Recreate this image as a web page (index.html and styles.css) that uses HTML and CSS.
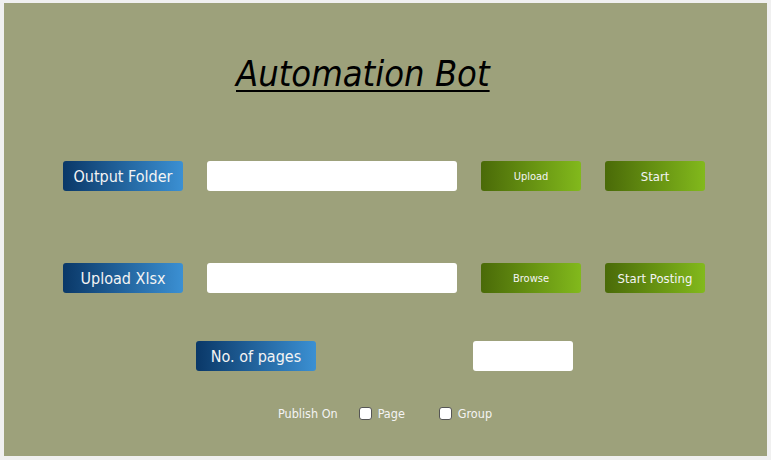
FILE: index.html
```html
<!DOCTYPE html>
<html>
<head>
<meta charset="utf-8">
<link rel="stylesheet" href="styles.css">
</head>
<body>
<div class="panel">
  <h1 class="title">Automation Bot</h1>
  <div class="row row1">
    <div class="label">Output Folder</div>
    <input class="field" type="text">
    <button class="btn btn-small">Upload</button>
    <button class="btn">Start</button>
  </div>
  <div class="row row2">
    <div class="label">Upload Xlsx</div>
    <input class="field" type="text">
    <button class="btn btn-small">Browse</button>
    <button class="btn">Start Posting</button>
  </div>
  <div class="row row3">
    <div class="label">No. of pages</div>
    <input class="field field-short" type="text">
  </div>
  <div class="publish">
    <span class="pub-label">Publish On</span>
    <label class="check"><span class="box"></span>Page</label>
    <label class="check check-group"><span class="box"></span>Group</label>
  </div>
</div>
</body>
</html>
```
FILE: styles.css
```css
html, body {
  margin: 0;
  padding: 0;
  background: #f0f0f0;
}
body {
  padding: 3px 4px 4px 4px;
  font-family: "DejaVu Sans Condensed", "DejaVu Sans", sans-serif;
}
.panel {
  width: 763px;
  height: 453px;
  background: #9da17b;
  box-sizing: border-box;
  padding-top: 50px;
}
.title {
  margin: 0 0 0 232px;
  font-family: "DejaVu Sans Condensed", "DejaVu Sans", sans-serif;
  font-style: italic;
  font-weight: normal;
  font-size: 36px;
  line-height: 42px;
  color: #000;
  text-decoration: underline;
  text-decoration-thickness: 2px;
  text-underline-offset: 4px;
}
.row {
  display: flex;
  align-items: center;
  height: 30px;
}
.row1 { margin-top: 66px; padding-left: 59px; }
.row2 { margin-top: 72px; padding-left: 59px; }
.row3 { margin-top: 48px; padding-left: 192px; }
.label {
  width: 120px;
  height: 30px;
  border-radius: 3px;
  background: linear-gradient(to right, #0a3868, #3b90d3);
  color: #f4f4f4;
  font-size: 16px;
  display: flex;
  align-items: center;
  justify-content: center;
}
.field {
  width: 250px;
  height: 30px;
  box-sizing: border-box;
  border: none;
  border-radius: 3px;
  background: #fff;
  margin-left: 24px;
  padding: 0;
}
.field-short {
  width: 100px;
  margin-left: 157px;
}
.btn {
  width: 100px;
  height: 30px;
  border: none;
  border-radius: 3px;
  background: linear-gradient(to right, #4a6a08, #82b91c);
  color: #f4f4f4;
  font-family: "DejaVu Sans Condensed", "DejaVu Sans", sans-serif;
  font-size: 13px;
  margin-left: 24px;
  padding: 0;
}
.btn-small {
  font-size: 11px;
}
.publish {
  display: flex;
  align-items: center;
  margin-top: 34px;
  padding-left: 274px;
  height: 16px;
  font-size: 12.5px;
  color: #f4f4f4;
}
.pub-label {
  margin-right: 21px;
}
.check {
  display: flex;
  align-items: center;
}
.check-group {
  margin-left: 34px;
}
.box {
  width: 11px;
  height: 11px;
  border: 1px solid #555;
  border-radius: 3px;
  background: #fff;
  margin-right: 6px;
}
```
